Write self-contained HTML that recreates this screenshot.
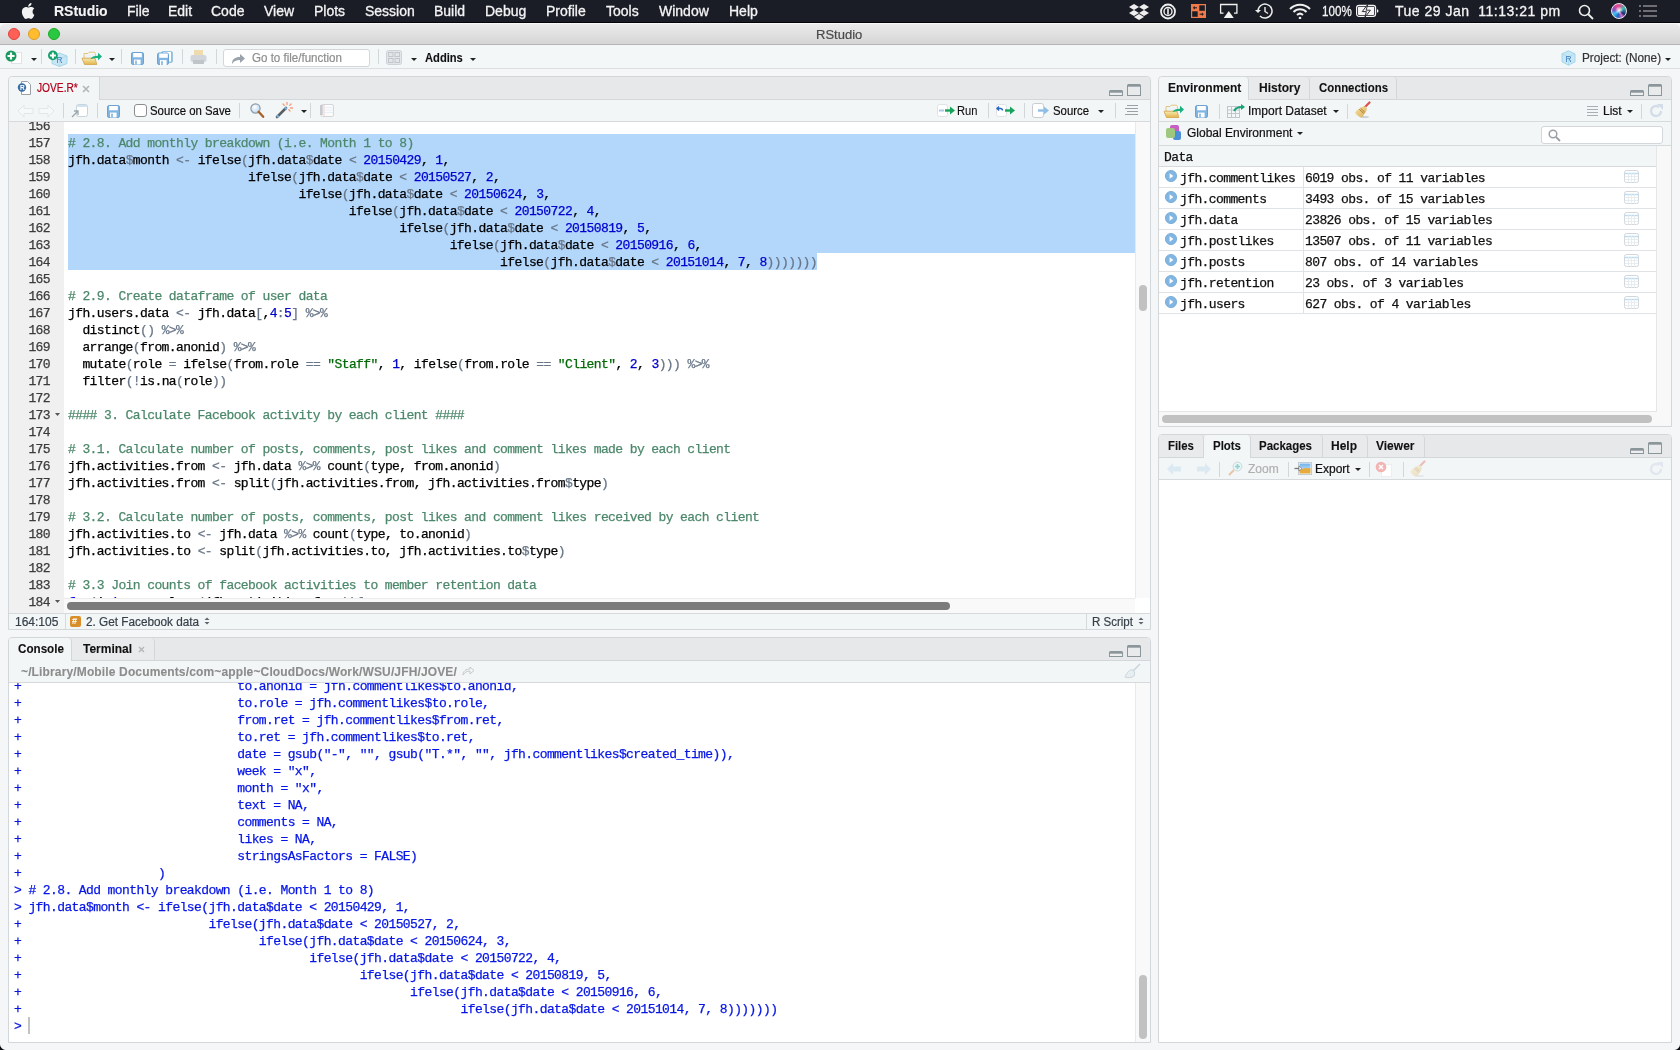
<!DOCTYPE html>
<html><head><meta charset="utf-8">
<style>
*{box-sizing:border-box}
html,body{margin:0;padding:0}
body{width:1680px;height:1050px;overflow:hidden;position:relative;will-change:transform;background:#f5f6f8;font-family:"Liberation Sans",sans-serif;font-size:12px;color:#1a1a1a}
.a{position:absolute}
.t{position:absolute;white-space:pre;line-height:14px}
.b{font-weight:bold}
i{font-style:normal}
.cl,.kl,.gl,.mono{-webkit-text-stroke:0.25px currentColor}
.t{-webkit-text-stroke:0.2px currentColor}
.t.b{-webkit-text-stroke:0.1px currentColor}
.cl i{-webkit-text-stroke:0.25px currentColor}
/* menubar */
#menubar{left:0;top:0;width:1680px;height:23px;background:#1a1d25;border-bottom:1px solid #050507}
#menubar .m{position:absolute;top:0;line-height:22px;font-size:14px;color:#f4f4f6;white-space:pre;-webkit-text-stroke:0.3px currentColor}
#menubar .m.b{-webkit-text-stroke:0.1px currentColor}
/* title */
#title{left:0;top:23px;width:1680px;height:22px;background:linear-gradient(#ebebeb,#d5d5d5);border-bottom:1px solid #b5b5b5;border-top:1px solid #f8f8f8;border-radius:5px 5px 0 0}
#toolbar{left:0;top:45px;width:1680px;height:24px;background:#f4f7f8;border-bottom:1px solid #dcdfe1}
.sep{position:absolute;width:1px;background:#d4d7da}
.pane{position:absolute;border:1px solid #d3d7da;background:#fff}
.tabbar{position:absolute;left:0;right:0;top:0;background:#e6e7e9;border-bottom:1px solid #d3d7da}
.tab{position:absolute;top:0;bottom:-1px;background:#e9eaec;border-right:1px solid #d3d7da;border-radius:4px 4px 0 0}
.tab.on{background:#f3f6f7;border-bottom:none}
.ptb{position:absolute;left:0;right:0;background:#f3f6f7;border-bottom:1px solid #d6dadd}
.gl{position:absolute;left:9px;width:41px;text-align:right;height:17px;line-height:17px;font-family:"Liberation Mono",monospace;font-size:13px;letter-spacing:-0.6px;color:#3b3b3b;white-space:pre}
.cl{position:absolute;left:68px;height:17px;line-height:17px;font-family:"Liberation Mono",monospace;font-size:13px;letter-spacing:-0.6px;color:#000;white-space:pre}
.kl{position:absolute;left:14px;height:17px;line-height:17px;font-family:"Liberation Mono",monospace;font-size:13px;letter-spacing:-0.6px;color:#0716e6;white-space:pre}
.mono{font-family:"Liberation Mono",monospace;font-size:13px;letter-spacing:-0.6px;white-space:pre;position:absolute;line-height:17px}
.cm{color:#4c886b}
.st{color:#036a07}
.nu{color:#0000cd}
.kw{color:#0000ff}
.op{color:#687687}
.drop{position:absolute;width:0;height:0;border-left:3px solid transparent;border-right:3px solid transparent;border-top:3.5px solid #222}
.minb{position:absolute;width:14px;height:6px;border:2px solid #8a9599;border-radius:3px 3px 1px 1px;background:#f6f6f6}
.maxb{position:absolute;width:14px;height:12px;border:1.5px solid #8a9599;border-top-width:2.5px;border-radius:2px;background:#eeeff0}
</style></head><body>

<!-- ============ MENUBAR ============ -->
<div id="menubar" class="a">
  <svg class="a" style="left:21px;top:3px" width="14" height="16" viewBox="0 0 14 16"><path fill="#f2f2f2" d="M11.6 8.5c0-2 1.6-2.9 1.7-3-1-1.4-2.4-1.6-2.9-1.6-1.2-.1-2.4.7-3 .7s-1.6-.7-2.6-.7C3.5 4 2.3 4.8 1.6 6c-1.4 2.4-.4 6 1 7.9.7 1 1.4 2 2.4 2s1.3-.6 2.5-.6 1.5.6 2.5.6 1.7-1 2.3-1.9c.7-1.1 1-2.1 1-2.2 0 0-2-.8-1.7-3.3zM9.700 2.6c.5-.7.9-1.6.8-2.6-.8 0-1.8.5-2.4 1.2-.5.6-1 1.5-.8 2.5.9.1 1.8-.4 2.4-1.1z"/></svg>
  <span class="m b" style="left:54px">RStudio</span>
  <span class="m" style="left:127px">File</span>
  <span class="m" style="left:168px">Edit</span>
  <span class="m" style="left:211px">Code</span>
  <span class="m" style="left:264px">View</span>
  <span class="m" style="left:314px">Plots</span>
  <span class="m" style="left:365px">Session</span>
  <span class="m" style="left:434px">Build</span>
  <span class="m" style="left:485px">Debug</span>
  <span class="m" style="left:546px">Profile</span>
  <span class="m" style="left:606px">Tools</span>
  <span class="m" style="left:659px">Window</span>
  <span class="m" style="left:729px">Help</span>
  <!-- status icons -->
  <svg class="a" style="left:1129px;top:3px" width="20" height="17" viewBox="0 0 20 17"><g fill="#eee"><path d="M5 1l5 3-5 3-5-3z"/><path d="M15 1l5 3-5 3-5-3z"/><path d="M5 7l5 3-5 3-5-3z"/><path d="M15 7l5 3-5 3-5-3z"/><path d="M10 11l5 3-5 3-5-3z"/></g></svg>
  <svg class="a" style="left:1159px;top:3px" width="18" height="17" viewBox="0 0 18 17"><circle cx="9" cy="8.5" r="7" fill="none" stroke="#eee" stroke-width="1.8"/><circle cx="9" cy="8.5" r="4" fill="none" stroke="#eee" stroke-width="1.4"/><rect x="8.2" y="5.5" width="1.6" height="6" fill="#eee"/></svg>
  <svg class="a" style="left:1191px;top:4px" width="15" height="14" viewBox="0 0 15 14"><rect width="15" height="14" fill="#f07a4a"/><rect x="8.3" y="1.3" width="5.5" height="5.5" fill="#1a1d25"/><rect x="1.2" y="7.3" width="5.5" height="5.5" fill="#1a1d25"/><path d="M2 3.8h4M3.3 2.4v2.8M8.6 10.2h4M11.3 8.8v2.8" stroke="#1a1d25" stroke-width="1"/></svg>
  <svg class="a" style="left:1219px;top:3px" width="20" height="16" viewBox="0 0 20 16"><path d="M4.5 10.2H1.6V1.5h16.3v8.7H15" fill="none" stroke="#f2f2f2" stroke-width="1.3"/><path d="M9.75 8l5 7h-10z" fill="#f2f2f2"/></svg>
  <svg class="a" style="left:1254px;top:2px" width="20" height="18" viewBox="0 0 20 18"><path d="M4 9a7 7 0 1 1 2 5" fill="none" stroke="#eee" stroke-width="1.5"/><path d="M1 8h6l-3 3z" fill="#eee"/><path d="M11 5v4.5l3 2" fill="none" stroke="#eee" stroke-width="1.4"/></svg>
  <svg class="a" style="left:1289px;top:3px" width="22" height="16" viewBox="0 0 22 16"><path d="M1 6a14 14 0 0 1 20 0" fill="none" stroke="#eee" stroke-width="2"/><path d="M4.5 9a9 9 0 0 1 13 0" fill="none" stroke="#eee" stroke-width="2"/><path d="M8 12a4.5 4.5 0 0 1 6 0" fill="none" stroke="#eee" stroke-width="2"/><circle cx="11" cy="15" r="1.3" fill="#eee"/></svg>
  <span class="m" style="left:1322px;font-size:14px;transform:scaleX(0.83);transform-origin:0 0">100%</span>
  <svg class="a" style="left:1355px;top:4px" width="25" height="14" viewBox="0 0 25 14"><rect x="1.6" y="1.4" width="19" height="11" rx="2.4" fill="none" stroke="#f4f4f4" stroke-width="1.2"/><rect x="3" y="2.8" width="16.2" height="8.2" rx="0.8" fill="#f4f4f4"/><path d="M22 5.2c1 0 1.4.8 1.4 1.7s-.4 1.7-1.4 1.7z" fill="#f4f4f4"/><path d="M12.6 0.6L7.2 7.6h4.2l-1.6 5.8 5.6-7.2h-4.2z" fill="#f4f4f4" stroke="#1a1d25" stroke-width="0.9" stroke-linejoin="round"/></svg>
  <span class="m" style="left:1395px;letter-spacing:0.5px">Tue 29 Jan  11:13:21 pm</span>
  <svg class="a" style="left:1578px;top:4px" width="16" height="16" viewBox="0 0 16 16"><circle cx="6.5" cy="6.5" r="5" fill="none" stroke="#eee" stroke-width="1.6"/><path d="M10 10l5 5" stroke="#eee" stroke-width="1.8"/></svg>
  <div class="a" style="left:1611px;top:3px;width:16px;height:16px;border-radius:50%;border:1.2px solid #e8e8ee;background:radial-gradient(circle at 50% 45%,rgba(255,255,255,.95) 0,rgba(255,255,255,.5) 2px,rgba(255,255,255,0) 4px),conic-gradient(from -30deg,#e0459a,#d8508a 40deg,#3fb8b0 90deg,#1d2c70 150deg,#d070c8 180deg,#2060c0 220deg,#40c8f0 270deg,#8050c0 310deg,#e0459a)"></div>
  <svg class="a" style="left:1639px;top:5px" width="18" height="13" viewBox="0 0 18 13"><g fill="#6e6e74"><rect x="0" y="0" width="2" height="2"/><rect x="4" y="0" width="14" height="2"/><rect x="0" y="5" width="2" height="2"/><rect x="4" y="5" width="14" height="2"/><rect x="0" y="10" width="2" height="2"/><rect x="4" y="10" width="14" height="2"/></g></svg>
</div>

<!-- ============ TITLE BAR ============ -->
<div id="title" class="a">
  <div class="a" style="left:8px;top:4px;width:12px;height:12px;border-radius:50%;background:#fe5f57;border:0.5px solid #e1443c"></div>
  <div class="a" style="left:28px;top:4px;width:12px;height:12px;border-radius:50%;background:#febc2e;border:0.5px solid #df9e23"></div>
  <div class="a" style="left:48px;top:4px;width:12px;height:12px;border-radius:50%;background:#28c840;border:0.5px solid #1aab29"></div>
  <span class="t" style="left:816px;top:3px;font-size:13px;line-height:15px;color:#4a4a4a">RStudio</span>
</div>

<!-- ============ MAIN TOOLBAR ============ -->
<div id="toolbar" class="a">
  <!-- new file -->
  <div class="a" style="left:11px;top:7px;width:11px;height:12px;background:#fff;border:1px solid #dfe3e6"></div>
  <svg class="a" style="left:5px;top:5px" width="12" height="12" viewBox="0 0 12 12"><circle cx="6" cy="6" r="5.5" fill="#1a9a5f"/><path d="M6 2.5v7M2.5 6h7" stroke="#fff" stroke-width="2.2"/></svg>
  <div class="drop" style="left:31px;top:13px"></div>
  <div class="sep" style="left:41px;top:4px;height:15px"></div>
  <!-- new project -->
  <svg class="a" style="left:47px;top:4px" width="22" height="19" viewBox="0 0 22 19"><path d="M12.5 4L20 7v7.5l-7.5 3-7.5-3V7z" fill="#c8e7f4" stroke="#94cfe6" stroke-width="0.8"/><path d="M5 7l7.5 3L20 7M12.5 10v7.5" fill="none" stroke="#a6d8ec" stroke-width="0.7"/><text x="9.6" y="14.2" font-size="8.5" fill="#3f78bc" font-family="Liberation Sans">R</text><circle cx="5.9" cy="6.4" r="4.9" fill="#17a06a"/><path d="M5.9 3.4v6M2.9 6.4h6" stroke="#fff" stroke-width="2"/></svg>
  <div class="sep" style="left:75px;top:4px;height:15px"></div>
  <!-- open -->
  <svg class="a" style="left:81px;top:6px" width="22" height="15" viewBox="0 0 22 15"><defs><linearGradient id="fg1" x1="0" y1="0" x2="0" y2="1"><stop offset="0" stop-color="#f7eab4"/><stop offset="1" stop-color="#e2b54a"/></linearGradient></defs><path d="M3 7V2.5h4l1.2-1.3h5.3l.8 1V7z" fill="#fbf7ea" stroke="#d8b76c" stroke-width="0.8"/><rect x="4" y="3" width="9.5" height="4" fill="#eef3f7"/><path d="M1 7.2h13l1.8 6.3H3.5z" fill="url(#fg1)" stroke="#cfa24a" stroke-width="0.8"/><path d="M9.5 8.2C10.8 5.6 13 4.8 17 4.8V1.8l4 3.8-4 3.7V6.9c-2.6 0-4.8.1-7.5 1.3z" fill="#17b07f"/></svg>
  <div class="drop" style="left:109px;top:13px"></div>
  <div class="sep" style="left:121px;top:4px;height:15px"></div>
  <!-- save -->
  <svg class="a" style="left:131px;top:7px" width="13" height="13" viewBox="0 0 13 13"><rect x="0.5" y="0.5" width="12" height="12" rx="1.6" fill="#80b4e2" stroke="#6ca2d3"/><rect x="2.2" y="1" width="8.6" height="4.3" fill="#fff"/><rect x="3" y="7.6" width="6.6" height="4.9" fill="#fff"/><rect x="4.2" y="8.6" width="1.6" height="3.9" fill="#80b4e2"/></svg>
  <!-- save all -->
  <svg class="a" style="left:157px;top:6px" width="16" height="14" viewBox="0 0 16 14"><rect x="4.5" y="0.5" width="11" height="11" rx="1.5" fill="#6fd0f0" stroke="#9cc3de"/><rect x="6" y="1" width="8" height="9.5" fill="#fff"/><g transform="translate(0,1.5)"><rect x="0.5" y="0.5" width="11" height="11.5" rx="1.6" fill="#80b4e2" stroke="#6ca2d3"/><rect x="2.2" y="1" width="8.6" height="4.3" fill="#fff"/><rect x="3" y="7.6" width="6.6" height="4.9" fill="#fff"/><rect x="4.2" y="8.6" width="1.6" height="3.9" fill="#80b4e2"/></g></svg>
  <div class="sep" style="left:182px;top:4px;height:15px"></div>
  <!-- print -->
  <svg class="a" style="left:190px;top:5px" width="17" height="15" viewBox="0 0 17 15"><rect x="4" y="0" width="9" height="6" fill="#eedcae"/><rect x="0.5" y="5" width="16" height="7" rx="2" fill="#d2d6db"/><rect x="3" y="10" width="11" height="4" fill="#c0c5ca"/></svg>
  <div class="sep" style="left:216px;top:4px;height:15px"></div>
  <!-- go to file -->
  <div class="a" style="left:223px;top:4px;width:147px;height:18px;background:#fff;border:1px solid #d3d7da;border-radius:3px"></div>
  <svg class="a" style="left:231px;top:8px" width="14" height="11" viewBox="0 0 14 11"><path d="M1 11c0-5 3-7 8-7V1l5 4.5-5 4.5V7c-4 0-6 1-8 4z" fill="#9aa3ab"/></svg>
  <span class="t" style="transform:scaleX(0.963);transform-origin:0 0;left:252px;top:6px;color:#8d8d8d">Go to file/function</span>
  <div class="sep" style="left:378px;top:4px;height:15px"></div>
  <!-- grid -->
  <svg class="a" style="left:386px;top:5px" width="16" height="15" viewBox="0 0 16 15"><rect x="0.5" y="0.5" width="15" height="14" rx="2" fill="#e3e6e9" stroke="#cfd3d7"/><rect x="2.5" y="2.5" width="4.5" height="4" fill="none" stroke="#c2c7cc"/><rect x="9" y="2.5" width="4.5" height="4" fill="none" stroke="#c2c7cc"/><rect x="2.5" y="8.5" width="4.5" height="4" fill="none" stroke="#c2c7cc"/><rect x="9" y="8.5" width="4.5" height="4" fill="none" stroke="#c2c7cc"/></svg>
  <div class="drop" style="left:411px;top:13px"></div>
  <span class="t b" style="transform:scaleX(0.93);transform-origin:0 0;left:425px;top:6px;color:#111">Addins</span>
  <div class="drop" style="left:470px;top:13px"></div>
  <!-- project -->
  <svg class="a" style="left:1561px;top:5px" width="15" height="16" viewBox="0 0 15 16"><path d="M7.5 0.8L14 3.8v8l-6.5 3.4L1 11.8v-8z" fill="#c8e7f4" stroke="#94cfe6" stroke-width="0.8"/><path d="M1 3.8l6.5 3.2L14 3.8M7.5 7v8.2" fill="none" stroke="#a6d8ec" stroke-width="0.7"/><text x="4.6" y="11.5" font-size="8.5" fill="#3f78bc" font-family="Liberation Sans">R</text></svg>
  <span class="t" style="transform:scaleX(0.98);transform-origin:0 0;left:1582px;top:6px;color:#333">Project: (None)</span>
  <div class="drop" style="left:1665px;top:13px"></div>

</div>

<!-- ============ EDITOR PANE ============ -->
<div class="a" style="left:8px;top:76px;width:1143px;height:554px;border:1px solid #d3d7da;background:#f3f6f7;border-radius:4px 4px 0 0"></div>
<!-- tab bar inactive area -->
<div class="a" style="left:99px;top:77px;width:1051px;height:23px;background:#e7e8ea;border-left:1px solid #d3d7da;border-bottom:1px solid #d3d7da;border-radius:0 4px 0 0"></div>
<div class="a" style="left:9px;top:77px;width:90px;height:23px;background:#f3f6f7;border-radius:4px 4px 0 0"></div>
<!-- tab content -->
<svg class="a" style="left:17px;top:80px" width="16" height="16" viewBox="0 0 16 16"><path d="M4.5 1.5h6l3 3v10h-9z" fill="#fff" stroke="#9aa0a6" stroke-width="1"/><circle cx="5" cy="7.5" r="4.2" fill="#3a6ea5"/><text x="3" y="10" font-size="6.5" font-weight="bold" fill="#fff" font-family="Liberation Sans">R</text></svg>
<span class="t" style="transform:scaleX(0.85);transform-origin:0 0;left:37px;top:81px;color:#b1001b">JOVE.R*</span>
<svg class="a" style="left:82px;top:85px" width="8" height="8" viewBox="0 0 8 8"><path d="M1 1l6 6M7 1l-6 6" stroke="#b5b5b5" stroke-width="1.6"/></svg>
<!-- min/max -->
<svg class="a" style="left:1109px;top:90px" width="14" height="6" viewBox="0 0 14 6"><path d="M1.5 0h11a1.5 1.5 0 0 1 1.5 1.5V6H0V1.5A1.5 1.5 0 0 1 1.5 0z" fill="#8b969b"/><rect x="1" y="2.7" width="12" height="2.3" fill="#eceef0"/></svg>
<svg class="a" style="left:1127px;top:84px" width="14" height="12" viewBox="0 0 14 12"><path d="M1.5 0h11a1.5 1.5 0 0 1 1.5 1.5V12H0V1.5A1.5 1.5 0 0 1 1.5 0z" fill="#8b969b"/><rect x="1" y="2.7" width="12" height="8.3" fill="#e9eaec"/></svg>
<!-- editor toolbar (bg from pane) -->
<div class="a" style="left:9px;top:121px;width:1141px;height:1px;background:#d6dadd"></div>
<svg class="a" style="left:17px;top:104px" width="38" height="14" viewBox="0 0 38 14"><path d="M1 7l6-6v3.5h9v5H7V13z" fill="#f6f9fa" stroke="#e3e7ea"/><path d="M37 7l-6-6v3.5h-9v5h9V13z" fill="#f6f9fa" stroke="#e3e7ea"/></svg>
<div class="sep" style="left:63px;top:103px;height:15px;background:#d3d6d9"></div>
<svg class="a" style="left:71px;top:104px" width="17" height="14" viewBox="0 0 17 14"><rect x="5.5" y="0.5" width="11" height="12" rx="2" fill="#fff" stroke="#c9d3da"/><rect x="6" y="1" width="10" height="2" fill="#cfe3f2"/><path d="M1 13l6-6M3 7h4v4" stroke="#9aa6ae" stroke-width="1.3" fill="none"/></svg>
<div class="sep" style="left:97px;top:103px;height:15px;background:#d3d6d9"></div>
<svg class="a" style="left:107px;top:105px" width="13" height="13" viewBox="0 0 13 13"><rect x="0.5" y="0.5" width="12" height="12" rx="1.6" fill="#80b4e2" stroke="#6ca2d3"/><rect x="2.2" y="1" width="8.6" height="4.3" fill="#fff"/><rect x="3" y="7.6" width="6.6" height="4.9" fill="#fff"/><rect x="4.2" y="8.6" width="1.6" height="3.9" fill="#80b4e2"/></svg>
<div class="a" style="left:134px;top:104px;width:13px;height:13px;border:1px solid #8d8d8d;border-radius:3px;background:#fff"></div>
<span class="t" style="transform:scaleX(0.948);transform-origin:0 0;left:150px;top:104px;color:#111">Source on Save</span>
<div class="sep" style="left:239px;top:103px;height:15px;background:#d3d6d9"></div>
<svg class="a" style="left:250px;top:103px" width="15" height="16" viewBox="0 0 15 16"><defs><radialGradient id="lg" cx="40%" cy="35%" r="70%"><stop offset="0" stop-color="#fff"/><stop offset="1" stop-color="#b9d6f0"/></radialGradient></defs><circle cx="5.5" cy="5.5" r="4.6" fill="url(#lg)" stroke="#8c9ba8" stroke-width="1.2"/><path d="M8.6 8.8l4.6 5" stroke="#a8602a" stroke-width="2.3" stroke-linecap="round"/></svg>
<svg class="a" style="left:275px;top:101px" width="19" height="18" viewBox="0 0 19 18"><path d="M2 16L11 7" stroke="#5a5f63" stroke-width="2.6" stroke-linecap="round"/><path d="M2 16l1.5-1.5M10 8l1.5-1.5" stroke="#6fb0e0" stroke-width="2.6"/><path d="M12 1.5v2M8 3l1.3 1.4M16 3l-1.3 1.4M17.5 7h-2M15 10l-1.2-1.4" stroke="#f59a7a" stroke-width="1.3" stroke-linecap="round"/></svg>
<div class="drop" style="left:301px;top:110px"></div>
<div class="sep" style="left:310px;top:103px;height:15px;background:#d3d6d9"></div>
<svg class="a" style="left:320px;top:104px" width="14" height="13" viewBox="0 0 14 13"><rect x="1" y="0.5" width="12.5" height="12" rx="1.5" fill="#fbfbfc" stroke="#d3d7db"/><path d="M4 1v11" stroke="#f3b9b9" stroke-width="0.7"/><path d="M4 3.5h9M4 6h9M4 8.5h9" stroke="#e3ebf5" stroke-width="0.7"/><path d="M0 2h3M0 4h3M0 6h3M0 8h3M0 10h3" stroke="#9aa0a6" stroke-width="0.8"/></svg>
<!-- right toolbar -->
<svg class="a" style="left:937px;top:104px" width="19" height="13" viewBox="0 0 19 13"><rect x="0.5" y="0.5" width="10" height="12" rx="2" fill="#fff" stroke="#dde2e6"/><path d="M2 6.5h5" stroke="#a8c9ea" stroke-width="2"/><path d="M8 6.5h6" stroke="#18a35b" stroke-width="2.4"/><path d="M13 2.5l5 4-5 4z" fill="#18a35b"/></svg>
<span class="t b" style="transform:scaleX(0.93);transform-origin:0 0;left:957px;top:104px;color:#111;font-weight:normal">Run</span>
<div class="sep" style="left:988px;top:103px;height:15px;background:#d3d6d9"></div>
<svg class="a" style="left:996px;top:104px" width="20" height="13" viewBox="0 0 20 13"><rect x="0.5" y="0.5" width="10" height="12" rx="2" fill="#fff" stroke="#dde2e6"/><path d="M3 2.5l-2 2 2 2M1.5 4.5h3a2 2 0 0 1 2 2" stroke="#2b67c8" stroke-width="1.4" fill="none"/><path d="M9 6.5h6" stroke="#18a35b" stroke-width="2.4"/><path d="M14 2.5l5 4-5 4z" fill="#18a35b"/></svg>
<div class="sep" style="left:1024px;top:103px;height:15px;background:#d3d6d9"></div>
<svg class="a" style="left:1032px;top:103px" width="19" height="15" viewBox="0 0 19 15"><rect x="0.5" y="0.5" width="11" height="14" rx="2" fill="#fff" stroke="#c9cdd1"/><path d="M6 7.5h7" stroke="#8fbfe6" stroke-width="2.4"/><path d="M12 3.5l5 4-5 4z" fill="#8fbfe6"/></svg>
<span class="t" style="transform:scaleX(0.946);transform-origin:0 0;left:1053px;top:104px;color:#111">Source</span>
<div class="drop" style="left:1098px;top:110px"></div>
<div class="sep" style="left:1115px;top:103px;height:15px;background:#d3d6d9"></div>
<svg class="a" style="left:1125px;top:105px" width="13" height="11" viewBox="0 0 13 11"><path d="M2 0.5h11M0 3.5h13M2 6.5h11M0 9.5h13" stroke="#9aa0a6" stroke-width="1"/></svg>

<!-- code area -->
<div class="a" style="left:9px;top:122px;width:1126px;height:476px;background:#fff;overflow:hidden">
  <div class="a" style="left:0;top:0;width:55px;height:491px;background:#f0f0f0"></div>
  <div class="a" style="left:59px;top:12px;width:1067px;height:119px;background:#b3d6fb"></div>
  <div class="a" style="left:59px;top:131px;width:749px;height:17px;background:#b3d6fb"></div>
</div>
<div class="a" style="left:64px;top:122px;width:1071px;height:476px;overflow:hidden">
  <div class="a" style="left:-64px;top:-122px;width:1200px;height:700px">
<div class="cl" style="top:118px"></div>
<div class="cl" style="top:135px"><i class="cm"># 2.8. Add monthly breakdown (i.e. Month 1 to 8)</i></div>
<div class="cl" style="top:152px">jfh.data<i class="op">$</i>month <i class="op">&lt;</i><i class="op">-</i> ifelse<i class="op">(</i>jfh.data<i class="op">$</i>date <i class="op">&lt;</i> <i class="nu">20150429</i>, <i class="nu">1</i>,</div>
<div class="cl" style="top:169px">                         ifelse<i class="op">(</i>jfh.data<i class="op">$</i>date <i class="op">&lt;</i> <i class="nu">20150527</i>, <i class="nu">2</i>,</div>
<div class="cl" style="top:186px">                                ifelse<i class="op">(</i>jfh.data<i class="op">$</i>date <i class="op">&lt;</i> <i class="nu">20150624</i>, <i class="nu">3</i>,</div>
<div class="cl" style="top:203px">                                       ifelse<i class="op">(</i>jfh.data<i class="op">$</i>date <i class="op">&lt;</i> <i class="nu">20150722</i>, <i class="nu">4</i>,</div>
<div class="cl" style="top:220px">                                              ifelse<i class="op">(</i>jfh.data<i class="op">$</i>date <i class="op">&lt;</i> <i class="nu">20150819</i>, <i class="nu">5</i>,</div>
<div class="cl" style="top:237px">                                                     ifelse<i class="op">(</i>jfh.data<i class="op">$</i>date <i class="op">&lt;</i> <i class="nu">20150916</i>, <i class="nu">6</i>,</div>
<div class="cl" style="top:254px">                                                            ifelse<i class="op">(</i>jfh.data<i class="op">$</i>date <i class="op">&lt;</i> <i class="nu">20151014</i>, <i class="nu">7</i>, <i class="nu">8</i><i class="op">)</i><i class="op">)</i><i class="op">)</i><i class="op">)</i><i class="op">)</i><i class="op">)</i><i class="op">)</i></div>
<div class="cl" style="top:271px"></div>
<div class="cl" style="top:288px"><i class="cm"># 2.9. Create dataframe of user data</i></div>
<div class="cl" style="top:305px">jfh.users.data <i class="op">&lt;</i><i class="op">-</i> jfh.data<i class="op">[</i>,<i class="nu">4</i><i class="op">:</i><i class="nu">5</i><i class="op">]</i> <i class="op">%&gt;%</i></div>
<div class="cl" style="top:322px">  distinct<i class="op">(</i><i class="op">)</i> <i class="op">%&gt;%</i></div>
<div class="cl" style="top:339px">  arrange<i class="op">(</i>from.anonid<i class="op">)</i> <i class="op">%&gt;%</i></div>
<div class="cl" style="top:356px">  mutate<i class="op">(</i>role <i class="op">=</i> ifelse<i class="op">(</i>from.role <i class="op">=</i><i class="op">=</i> <i class="st">"Staff"</i>, <i class="nu">1</i>, ifelse<i class="op">(</i>from.role <i class="op">=</i><i class="op">=</i> <i class="st">"Client"</i>, <i class="nu">2</i>, <i class="nu">3</i><i class="op">)</i><i class="op">)</i><i class="op">)</i> <i class="op">%&gt;%</i></div>
<div class="cl" style="top:373px">  filter<i class="op">(</i><i class="op">!</i>is.na<i class="op">(</i>role<i class="op">)</i><i class="op">)</i></div>
<div class="cl" style="top:390px"></div>
<div class="cl" style="top:407px"><i class="cm">#### 3. Calculate Facebook activity by each client ####</i></div>
<div class="cl" style="top:424px"></div>
<div class="cl" style="top:441px"><i class="cm"># 3.1. Calculate number of posts, comments, post likes and comment likes made by each client</i></div>
<div class="cl" style="top:458px">jfh.activities.from <i class="op">&lt;</i><i class="op">-</i> jfh.data <i class="op">%&gt;%</i> count<i class="op">(</i>type, from.anonid<i class="op">)</i></div>
<div class="cl" style="top:475px">jfh.activities.from <i class="op">&lt;</i><i class="op">-</i> split<i class="op">(</i>jfh.activities.from, jfh.activities.from<i class="op">$</i>type<i class="op">)</i></div>
<div class="cl" style="top:492px"></div>
<div class="cl" style="top:509px"><i class="cm"># 3.2. Calculate number of posts, comments, post likes and comment likes received by each client</i></div>
<div class="cl" style="top:526px">jfh.activities.to <i class="op">&lt;</i><i class="op">-</i> jfh.data <i class="op">%&gt;%</i> count<i class="op">(</i>type, to.anonid<i class="op">)</i></div>
<div class="cl" style="top:543px">jfh.activities.to <i class="op">&lt;</i><i class="op">-</i> split<i class="op">(</i>jfh.activities.to, jfh.activities.to<i class="op">$</i>type<i class="op">)</i></div>
<div class="cl" style="top:560px"></div>
<div class="cl" style="top:577px"><i class="cm"># 3.3 Join counts of facebook activities to member retention data</i></div>
<div class="cl" style="top:594px"><i class="kw">for</i><i class="op">(</i>i <i class="kw">in</i> seq_along<i class="op">(</i>jfh.activities.from<i class="op">)</i><i class="op">)</i><i class="op">{</i></div>
  </div>
</div>
<!-- gutter -->
<div class="a" style="left:9px;top:122px;width:55px;height:491px;background:#f0f0f0;overflow:hidden">
  <div class="a" style="left:-9px;top:-122px;width:100px;height:700px">
<div class="gl" style="top:118px">156</div>
<div class="gl" style="top:135px">157</div>
<div class="gl" style="top:152px">158</div>
<div class="gl" style="top:169px">159</div>
<div class="gl" style="top:186px">160</div>
<div class="gl" style="top:203px">161</div>
<div class="gl" style="top:220px">162</div>
<div class="gl" style="top:237px">163</div>
<div class="gl" style="top:254px">164</div>
<div class="gl" style="top:271px">165</div>
<div class="gl" style="top:288px">166</div>
<div class="gl" style="top:305px">167</div>
<div class="gl" style="top:322px">168</div>
<div class="gl" style="top:339px">169</div>
<div class="gl" style="top:356px">170</div>
<div class="gl" style="top:373px">171</div>
<div class="gl" style="top:390px">172</div>
<div class="gl" style="top:407px">173</div>
<svg class="a" style="left:55px;top:413px" width="5" height="3" viewBox="0 0 5 3"><path d="M0 0h5L2.5 3z" fill="#555"/></svg>
<div class="gl" style="top:424px">174</div>
<div class="gl" style="top:441px">175</div>
<div class="gl" style="top:458px">176</div>
<div class="gl" style="top:475px">177</div>
<div class="gl" style="top:492px">178</div>
<div class="gl" style="top:509px">179</div>
<div class="gl" style="top:526px">180</div>
<div class="gl" style="top:543px">181</div>
<div class="gl" style="top:560px">182</div>
<div class="gl" style="top:577px">183</div>
<div class="gl" style="top:594px">184</div>
<svg class="a" style="left:55px;top:600px" width="5" height="3" viewBox="0 0 5 3"><path d="M0 0h5L2.5 3z" fill="#555"/></svg>
  </div>
</div>
<!-- vertical scrollbar -->
<div class="a" style="left:1135px;top:122px;width:15px;height:476px;background:#f9f9f9;border-left:1px solid #e9e9e9"></div>
<div class="a" style="left:1139px;top:285px;width:8px;height:26px;background:#c1c1c1;border-radius:4px"></div>
<!-- horizontal scrollbar -->
<div class="a" style="left:64px;top:598px;width:1071px;height:15px;background:#f9f9f9;border-top:1px solid #ececec"></div>
<div class="a" style="left:67px;top:602px;width:883px;height:8px;background:#7b7b7b;border-radius:4px"></div>
<div class="a" style="left:1135px;top:598px;width:15px;height:15px;background:#fff"></div>
<!-- status bar -->
<div class="a" style="left:9px;top:613px;width:1141px;height:16px;background:#f3f6f7;border-top:1px solid #d6dadd"></div>
<span class="t" style="left:15px;top:615px;color:#37414a">164:105</span>
<div class="sep" style="left:65px;top:614px;height:15px;background:#d6dadd"></div>
<div class="a" style="left:70px;top:616px;width:11px;height:11px;background:#d98e2c;border-radius:2px"></div>
<span class="t b" style="left:72px;top:614px;font-size:9px;color:#fff">#</span>
<span class="t" style="left:86px;top:615px;color:#37414a;transform:scaleX(0.98);transform-origin:0 0">2. Get Facebook data</span>
<svg class="a" style="left:204px;top:616px" width="6" height="10" viewBox="0 0 6 10"><path d="M0.5 4l2.5-2.6 2.5 2.6zM0.5 6l2.5 2.6 2.5-2.6z" fill="#5d666c"/></svg>
<div class="sep" style="left:1086px;top:614px;height:15px;background:#d6dadd"></div>
<span class="t" style="transform:scaleX(0.96);transform-origin:0 0;left:1092px;top:615px;color:#37414a">R Script</span>
<svg class="a" style="left:1138px;top:616px" width="6" height="10" viewBox="0 0 6 10"><path d="M0.5 4l2.5-2.6 2.5 2.6zM0.5 6l2.5 2.6 2.5-2.6z" fill="#5d666c"/></svg>
<!-- ============ CONSOLE PANE ============ -->
<div class="a" style="left:8px;top:637px;width:1143px;height:406px;border:1px solid #d3d7da;background:#fff;border-radius:4px 4px 0 0"></div>
<div class="a" style="left:9px;top:638px;width:1141px;height:23px;background:#e7e8ea;border-bottom:1px solid #d3d7da;border-radius:4px 4px 0 0"></div>
<div class="a" style="left:9px;top:638px;width:63px;height:23px;background:#f3f6f7;border-right:1px solid #d3d7da;border-radius:4px 4px 0 0"></div>
<div class="a" style="left:72px;top:638px;width:83px;height:22px;background:#e9eaec;border-right:1px solid #d3d7da;border-radius:4px 4px 0 0"></div>
<span class="t b" style="transform:scaleX(0.97);transform-origin:0 0;left:18px;top:642px;color:#111">Console</span>
<span class="t b" style="left:83px;top:642px;color:#111">Terminal</span>
<svg class="a" style="left:138px;top:646px" width="7" height="7" viewBox="0 0 7 7"><path d="M1 1l5 5M6 1l-5 5" stroke="#b5b5b5" stroke-width="1.4"/></svg>
<svg class="a" style="left:1109px;top:651px" width="14" height="6" viewBox="0 0 14 6"><path d="M1.5 0h11a1.5 1.5 0 0 1 1.5 1.5V6H0V1.5A1.5 1.5 0 0 1 1.5 0z" fill="#8b969b"/><rect x="1" y="2.7" width="12" height="2.3" fill="#eceef0"/></svg>
<svg class="a" style="left:1127px;top:645px" width="14" height="12" viewBox="0 0 14 12"><path d="M1.5 0h11a1.5 1.5 0 0 1 1.5 1.5V12H0V1.5A1.5 1.5 0 0 1 1.5 0z" fill="#8b969b"/><rect x="1" y="2.7" width="12" height="8.3" fill="#e9eaec"/></svg>
<!-- path bar -->
<div class="a" style="left:9px;top:661px;width:1141px;height:22px;background:#f3f6f7;border-bottom:1px solid #d6dadd"></div>
<span class="t b" style="left:21px;top:665px;color:#8c8c8c;letter-spacing:0.14px">~/Library/Mobile Documents/com~apple~CloudDocs/Work/WSU/JFH/JOVE/</span>
<svg class="a" style="left:462px;top:666px" width="12" height="10" viewBox="0 0 12 10"><path d="M1 9c0-4 3-6 7-6V1l4 3.5-4 3.5V5c-3 0-5 1-7 4z" fill="none" stroke="#c5c9cd"/></svg>
<svg class="a" style="left:1124px;top:663px" width="17" height="17" viewBox="0 0 17 17"><path d="M16 1L9 8" stroke="#c9d3db" stroke-width="1.5"/><path d="M9 7c-3-1-6 2-8 7 3 1 6 1 9-1 1-2 1-4-1-6z" fill="#e9eef2" stroke="#c9d3db"/></svg>
<!-- console content -->
<div class="a" style="left:9px;top:683px;width:1126px;height:359px;overflow:hidden">
  <div class="a" style="left:-9px;top:-683px;width:1200px;height:1100px">
<div class="kl" style="top:678px">+                              to.anonid = jfh.commentlikes$to.anonid,</div>
<div class="kl" style="top:695px">+                              to.role = jfh.commentlikes$to.role,</div>
<div class="kl" style="top:712px">+                              from.ret = jfh.commentlikes$from.ret,</div>
<div class="kl" style="top:729px">+                              to.ret = jfh.commentlikes$to.ret,</div>
<div class="kl" style="top:746px">+                              date = gsub("-", "", gsub("T.*", "", jfh.commentlikes$created_time)),</div>
<div class="kl" style="top:763px">+                              week = "x",</div>
<div class="kl" style="top:780px">+                              month = "x",</div>
<div class="kl" style="top:797px">+                              text = NA,</div>
<div class="kl" style="top:814px">+                              comments = NA,</div>
<div class="kl" style="top:831px">+                              likes = NA,</div>
<div class="kl" style="top:848px">+                              stringsAsFactors = FALSE)</div>
<div class="kl" style="top:865px">+                   )</div>
<div class="kl" style="top:882px">&gt; # 2.8. Add monthly breakdown (i.e. Month 1 to 8)</div>
<div class="kl" style="top:899px">&gt; jfh.data$month &lt;- ifelse(jfh.data$date &lt; 20150429, 1,</div>
<div class="kl" style="top:916px">+                          ifelse(jfh.data$date &lt; 20150527, 2,</div>
<div class="kl" style="top:933px">+                                 ifelse(jfh.data$date &lt; 20150624, 3,</div>
<div class="kl" style="top:950px">+                                        ifelse(jfh.data$date &lt; 20150722, 4,</div>
<div class="kl" style="top:967px">+                                               ifelse(jfh.data$date &lt; 20150819, 5,</div>
<div class="kl" style="top:984px">+                                                      ifelse(jfh.data$date &lt; 20150916, 6,</div>
<div class="kl" style="top:1001px">+                                                             ifelse(jfh.data$date &lt; 20151014, 7, 8)))))))</div>
<div class="kl" style="top:1018px">&gt; </div>
  </div>
</div>
<div class="a" style="left:28px;top:1017px;width:2px;height:17px;background:#c2c2c2"></div>
<!-- console vscroll -->
<div class="a" style="left:1135px;top:683px;width:15px;height:359px;background:#f9f9f9;border-left:1px solid #e9e9e9"></div>
<div class="a" style="left:1139px;top:975px;width:8px;height:64px;background:#c1c1c1;border-radius:4px"></div>
<!-- ============ ENVIRONMENT PANE ============ -->
<div class="a" style="left:1158px;top:76px;width:514px;height:351px;border:1px solid #d3d7da;background:#fff;border-radius:4px 4px 0 0"></div>
<div class="a" style="left:1159px;top:77px;width:512px;height:23px;background:#e7e8ea;border-bottom:1px solid #d3d7da;border-radius:4px 4px 0 0"></div>
<div class="a" style="left:1159px;top:77px;width:90px;height:23px;background:#f3f6f7;border-right:1px solid #d3d7da;border-radius:4px 4px 0 0"></div>
<div class="a" style="left:1249px;top:77px;width:61px;height:22px;background:#e9eaec;border-right:1px solid #d3d7da;border-radius:4px 4px 0 0"></div>
<div class="a" style="left:1310px;top:77px;width:87px;height:22px;background:#e9eaec;border-right:1px solid #d3d7da;border-radius:4px 4px 0 0"></div>
<span class="t b" style="left:1168px;top:81px;color:#111">Environment</span>
<span class="t b" style="left:1259px;top:81px;color:#111">History</span>
<span class="t b" style="transform:scaleX(0.95);transform-origin:0 0;left:1319px;top:81px;color:#111">Connections</span>
<svg class="a" style="left:1630px;top:90px" width="14" height="6" viewBox="0 0 14 6"><path d="M1.5 0h11a1.5 1.5 0 0 1 1.5 1.5V6H0V1.5A1.5 1.5 0 0 1 1.5 0z" fill="#8b969b"/><rect x="1" y="2.7" width="12" height="2.3" fill="#eceef0"/></svg>
<svg class="a" style="left:1648px;top:84px" width="14" height="12" viewBox="0 0 14 12"><path d="M1.5 0h11a1.5 1.5 0 0 1 1.5 1.5V12H0V1.5A1.5 1.5 0 0 1 1.5 0z" fill="#8b969b"/><rect x="1" y="2.7" width="12" height="8.3" fill="#e9eaec"/></svg>
<!-- toolbar -->
<div class="a" style="left:1159px;top:100px;width:512px;height:22px;background:#f3f6f7;border-bottom:1px solid #d6dadd"></div>
<svg class="a" style="left:1163px;top:104px" width="22" height="15" viewBox="0 0 22 15"><defs><linearGradient id="fg2" x1="0" y1="0" x2="0" y2="1"><stop offset="0" stop-color="#f7eab4"/><stop offset="1" stop-color="#e2b54a"/></linearGradient></defs><path d="M3 7V2.5h4l1.2-1.3h5.3l.8 1V7z" fill="#fbf7ea" stroke="#d8b76c" stroke-width="0.8"/><rect x="4" y="3" width="9.5" height="4" fill="#eef3f7"/><path d="M1 7.2h13l1.8 6.3H3.5z" fill="url(#fg2)" stroke="#cfa24a" stroke-width="0.8"/><path d="M9.5 8.2C10.8 5.6 13 4.8 17 4.8V1.8l4 3.8-4 3.7V6.9c-2.6 0-4.8.1-7.5 1.3z" fill="#17b07f"/></svg>
<svg class="a" style="left:1195px;top:105px" width="13" height="13" viewBox="0 0 13 13"><rect x="0.5" y="0.5" width="12" height="12" rx="1.6" fill="#80b4e2" stroke="#6ca2d3"/><rect x="2.2" y="1" width="8.6" height="4.3" fill="#fff"/><rect x="3" y="7.6" width="6.6" height="4.9" fill="#fff"/><rect x="4.2" y="8.6" width="1.6" height="3.9" fill="#80b4e2"/></svg>
<div class="sep" style="left:1219px;top:104px;height:15px"></div>
<svg class="a" style="left:1227px;top:103px" width="19" height="15" viewBox="0 0 19 15"><rect x="0.5" y="3.5" width="12" height="11" fill="#f4f6f8" stroke="#c0c6cc"/><path d="M0.5 7h12M0.5 10.5h12M4.5 3.5v11M8.5 3.5v11" stroke="#c0c6cc"/><path d="M7 8c2-4 5-4 8-4" stroke="#17a377" stroke-width="2" fill="none"/><path d="M14 1l4 3-4 3z" fill="#17a377"/></svg>
<span class="t" style="left:1248px;top:104px;color:#111">Import Dataset</span>
<div class="drop" style="left:1333px;top:110px"></div>
<div class="sep" style="left:1347px;top:104px;height:15px"></div>
<svg class="a" style="left:1354px;top:101px" width="17" height="18" viewBox="0 0 17 18"><defs><linearGradient id="bg1" x1="0" y1="0" x2="1" y2="1"><stop offset="0" stop-color="#f6e4a0"/><stop offset="1" stop-color="#d8ae5c"/></linearGradient></defs><ellipse cx="10.5" cy="16" rx="4.5" ry="1" fill="#aeb5bb" opacity=".6"/><path d="M15.5 1.5L11 6" stroke="#d9534a" stroke-width="2.2" stroke-linecap="round"/><path d="M11.8 5.6c1.3 1.4 1.4 3.4-.1 5.4L8.2 16.2c-2.2.5-5.2-1.2-7.2-4.7 2-2.6 5-4.4 8-5.9z" fill="url(#bg1)"/><path d="M6.6 7.2l4.3 4.1M5.3 8.3l4.4 4.1" stroke="#b57c34" stroke-width="1"/></svg>
<svg class="a" style="left:1587px;top:106px" width="11" height="10" viewBox="0 0 11 10"><path d="M0 .5h11M0 3.5h11M0 6.5h11M0 9.5h11" stroke="#a9aeb3"/></svg>
<span class="t" style="left:1603px;top:104px;color:#111">List</span>
<div class="drop" style="left:1627px;top:110px"></div>
<div class="sep" style="left:1641px;top:104px;height:15px"></div>
<svg class="a" style="left:1648px;top:103px" width="16" height="16" viewBox="0 0 16 16"><path d="M13 8a5 5 0 1 1-2-4" fill="none" stroke="#d3dde8" stroke-width="2.4"/><path d="M9 1h6v6z" fill="#d3dde8"/></svg>
<!-- global env bar -->
<div class="a" style="left:1159px;top:122px;width:512px;height:24px;background:#f3f6f7;border-bottom:1px solid #d6dadd"></div>
<svg class="a" style="left:1166px;top:125px" width="16" height="16" viewBox="0 0 16 16"><rect x="4" y="0" width="9" height="9" rx="2" fill="#c85fc6"/><rect x="7" y="6" width="8" height="9" rx="2" fill="#4b8fd8"/><rect x="0" y="3" width="9" height="10" rx="2" fill="#9fc87e"/></svg>
<span class="t" style="left:1187px;top:126px;color:#111">Global Environment</span>
<div class="drop" style="left:1297px;top:132px"></div>
<div class="a" style="left:1541px;top:126px;width:122px;height:18px;background:#fff;border:1px solid #d3d7da;border-radius:3px"></div>
<svg class="a" style="left:1548px;top:129px" width="13" height="13" viewBox="0 0 13 13"><circle cx="5" cy="5" r="3.8" fill="none" stroke="#9aa0a6" stroke-width="1.5"/><path d="M8 8l4 4" stroke="#9aa0a6" stroke-width="1.8"/></svg>
<!-- table -->
<div class="a" style="left:1159px;top:146px;width:497px;height:21px;background:#f3f6f7;border-bottom:1px solid #d6dadd"></div>
<span class="mono" style="left:1164px;top:149px;color:#111">Data</span>
<div class="a" style="left:1159px;top:167px;width:497px;height:21px;border-bottom:1px solid #dfe3e6;background:#fff"></div>
<div class="a" style="left:1303px;top:167px;width:1px;height:20px;background:#dfe3e6"></div>
<svg class="a" style="left:1165px;top:170px" width="12" height="12" viewBox="0 0 12 12"><circle cx="6" cy="6" r="5.6" fill="#82b6e2" stroke="#6ea4d3" stroke-width="0.8"/><path d="M4.6 3.2l3.8 2.8-3.8 2.8z" fill="#fff"/></svg>
<span class="mono" style="left:1180px;top:170px;color:#111">jfh.commentlikes</span>
<span class="mono" style="left:1305px;top:170px;color:#111">6019 obs. of 11 variables</span>
<svg class="a" style="left:1624px;top:170px" width="15" height="13" viewBox="0 0 15 13"><rect x="0.5" y="0.5" width="14" height="12" rx="2" fill="#fff" stroke="#cfd6dc"/><path d="M0.5 3.5h14" stroke="#bcdcf0" stroke-width="1.5"/><path d="M0.5 6.5h14M0.5 9.5h14M4.5 3v10M7.5 3v10M10.5 3v10" stroke="#e3e8ec" stroke-width="0.8"/></svg>
<div class="a" style="left:1159px;top:188px;width:497px;height:21px;border-bottom:1px solid #dfe3e6;background:#fff"></div>
<div class="a" style="left:1303px;top:188px;width:1px;height:20px;background:#dfe3e6"></div>
<svg class="a" style="left:1165px;top:191px" width="12" height="12" viewBox="0 0 12 12"><circle cx="6" cy="6" r="5.6" fill="#82b6e2" stroke="#6ea4d3" stroke-width="0.8"/><path d="M4.6 3.2l3.8 2.8-3.8 2.8z" fill="#fff"/></svg>
<span class="mono" style="left:1180px;top:191px;color:#111">jfh.comments</span>
<span class="mono" style="left:1305px;top:191px;color:#111">3493 obs. of 15 variables</span>
<svg class="a" style="left:1624px;top:191px" width="15" height="13" viewBox="0 0 15 13"><rect x="0.5" y="0.5" width="14" height="12" rx="2" fill="#fff" stroke="#cfd6dc"/><path d="M0.5 3.5h14" stroke="#bcdcf0" stroke-width="1.5"/><path d="M0.5 6.5h14M0.5 9.5h14M4.5 3v10M7.5 3v10M10.5 3v10" stroke="#e3e8ec" stroke-width="0.8"/></svg>
<div class="a" style="left:1159px;top:209px;width:497px;height:21px;border-bottom:1px solid #dfe3e6;background:#fff"></div>
<div class="a" style="left:1303px;top:209px;width:1px;height:20px;background:#dfe3e6"></div>
<svg class="a" style="left:1165px;top:212px" width="12" height="12" viewBox="0 0 12 12"><circle cx="6" cy="6" r="5.6" fill="#82b6e2" stroke="#6ea4d3" stroke-width="0.8"/><path d="M4.6 3.2l3.8 2.8-3.8 2.8z" fill="#fff"/></svg>
<span class="mono" style="left:1180px;top:212px;color:#111">jfh.data</span>
<span class="mono" style="left:1305px;top:212px;color:#111">23826 obs. of 15 variables</span>
<svg class="a" style="left:1624px;top:212px" width="15" height="13" viewBox="0 0 15 13"><rect x="0.5" y="0.5" width="14" height="12" rx="2" fill="#fff" stroke="#cfd6dc"/><path d="M0.5 3.5h14" stroke="#bcdcf0" stroke-width="1.5"/><path d="M0.5 6.5h14M0.5 9.5h14M4.5 3v10M7.5 3v10M10.5 3v10" stroke="#e3e8ec" stroke-width="0.8"/></svg>
<div class="a" style="left:1159px;top:230px;width:497px;height:21px;border-bottom:1px solid #dfe3e6;background:#fff"></div>
<div class="a" style="left:1303px;top:230px;width:1px;height:20px;background:#dfe3e6"></div>
<svg class="a" style="left:1165px;top:233px" width="12" height="12" viewBox="0 0 12 12"><circle cx="6" cy="6" r="5.6" fill="#82b6e2" stroke="#6ea4d3" stroke-width="0.8"/><path d="M4.6 3.2l3.8 2.8-3.8 2.8z" fill="#fff"/></svg>
<span class="mono" style="left:1180px;top:233px;color:#111">jfh.postlikes</span>
<span class="mono" style="left:1305px;top:233px;color:#111">13507 obs. of 11 variables</span>
<svg class="a" style="left:1624px;top:233px" width="15" height="13" viewBox="0 0 15 13"><rect x="0.5" y="0.5" width="14" height="12" rx="2" fill="#fff" stroke="#cfd6dc"/><path d="M0.5 3.5h14" stroke="#bcdcf0" stroke-width="1.5"/><path d="M0.5 6.5h14M0.5 9.5h14M4.5 3v10M7.5 3v10M10.5 3v10" stroke="#e3e8ec" stroke-width="0.8"/></svg>
<div class="a" style="left:1159px;top:251px;width:497px;height:21px;border-bottom:1px solid #dfe3e6;background:#fff"></div>
<div class="a" style="left:1303px;top:251px;width:1px;height:20px;background:#dfe3e6"></div>
<svg class="a" style="left:1165px;top:254px" width="12" height="12" viewBox="0 0 12 12"><circle cx="6" cy="6" r="5.6" fill="#82b6e2" stroke="#6ea4d3" stroke-width="0.8"/><path d="M4.6 3.2l3.8 2.8-3.8 2.8z" fill="#fff"/></svg>
<span class="mono" style="left:1180px;top:254px;color:#111">jfh.posts</span>
<span class="mono" style="left:1305px;top:254px;color:#111">807 obs. of 14 variables</span>
<svg class="a" style="left:1624px;top:254px" width="15" height="13" viewBox="0 0 15 13"><rect x="0.5" y="0.5" width="14" height="12" rx="2" fill="#fff" stroke="#cfd6dc"/><path d="M0.5 3.5h14" stroke="#bcdcf0" stroke-width="1.5"/><path d="M0.5 6.5h14M0.5 9.5h14M4.5 3v10M7.5 3v10M10.5 3v10" stroke="#e3e8ec" stroke-width="0.8"/></svg>
<div class="a" style="left:1159px;top:272px;width:497px;height:21px;border-bottom:1px solid #dfe3e6;background:#fff"></div>
<div class="a" style="left:1303px;top:272px;width:1px;height:20px;background:#dfe3e6"></div>
<svg class="a" style="left:1165px;top:275px" width="12" height="12" viewBox="0 0 12 12"><circle cx="6" cy="6" r="5.6" fill="#82b6e2" stroke="#6ea4d3" stroke-width="0.8"/><path d="M4.6 3.2l3.8 2.8-3.8 2.8z" fill="#fff"/></svg>
<span class="mono" style="left:1180px;top:275px;color:#111">jfh.retention</span>
<span class="mono" style="left:1305px;top:275px;color:#111">23 obs. of 3 variables</span>
<svg class="a" style="left:1624px;top:275px" width="15" height="13" viewBox="0 0 15 13"><rect x="0.5" y="0.5" width="14" height="12" rx="2" fill="#fff" stroke="#cfd6dc"/><path d="M0.5 3.5h14" stroke="#bcdcf0" stroke-width="1.5"/><path d="M0.5 6.5h14M0.5 9.5h14M4.5 3v10M7.5 3v10M10.5 3v10" stroke="#e3e8ec" stroke-width="0.8"/></svg>
<div class="a" style="left:1159px;top:293px;width:497px;height:21px;border-bottom:1px solid #dfe3e6;background:#fff"></div>
<div class="a" style="left:1303px;top:293px;width:1px;height:20px;background:#dfe3e6"></div>
<svg class="a" style="left:1165px;top:296px" width="12" height="12" viewBox="0 0 12 12"><circle cx="6" cy="6" r="5.6" fill="#82b6e2" stroke="#6ea4d3" stroke-width="0.8"/><path d="M4.6 3.2l3.8 2.8-3.8 2.8z" fill="#fff"/></svg>
<span class="mono" style="left:1180px;top:296px;color:#111">jfh.users</span>
<span class="mono" style="left:1305px;top:296px;color:#111">627 obs. of 4 variables</span>
<svg class="a" style="left:1624px;top:296px" width="15" height="13" viewBox="0 0 15 13"><rect x="0.5" y="0.5" width="14" height="12" rx="2" fill="#fff" stroke="#cfd6dc"/><path d="M0.5 3.5h14" stroke="#bcdcf0" stroke-width="1.5"/><path d="M0.5 6.5h14M0.5 9.5h14M4.5 3v10M7.5 3v10M10.5 3v10" stroke="#e3e8ec" stroke-width="0.8"/></svg>
<div class="a" style="left:1656px;top:146px;width:15px;height:280px;background:#f8f8f8;border-left:1px solid #e6e6e6"></div>
<!-- hscroll -->
<div class="a" style="left:1159px;top:411px;width:498px;height:15px;background:#f8f8f8;border-top:1px solid #e6e6e6"></div><div class="a" style="left:1657px;top:411px;width:14px;height:15px;background:#f8f8f8"></div>
<div class="a" style="left:1162px;top:415px;width:490px;height:8px;background:#c1c1c1;border-radius:4px"></div>
<!-- ============ FILES PANE ============ -->
<div class="a" style="left:1158px;top:434px;width:514px;height:609px;border:1px solid #d3d7da;background:#fff;border-radius:4px 4px 0 0"></div>
<div class="a" style="left:1159px;top:435px;width:512px;height:23px;background:#e7e8ea;border-bottom:1px solid #d3d7da;border-radius:4px 4px 0 0"></div>
<div class="a" style="left:1159px;top:435px;width:45px;height:22px;background:#e9eaec;border-right:1px solid #d3d7da;border-radius:4px 4px 0 0"></div>
<div class="a" style="left:1204px;top:435px;width:47px;height:23px;background:#f3f6f7;border-right:1px solid #d3d7da;border-radius:4px 4px 0 0"></div>
<div class="a" style="left:1251px;top:435px;width:72px;height:22px;background:#e9eaec;border-right:1px solid #d3d7da;border-radius:4px 4px 0 0"></div>
<div class="a" style="left:1323px;top:435px;width:45px;height:22px;background:#e9eaec;border-right:1px solid #d3d7da;border-radius:4px 4px 0 0"></div>
<div class="a" style="left:1368px;top:435px;width:57px;height:22px;background:#e9eaec;border-right:1px solid #d3d7da;border-radius:4px 4px 0 0"></div>
<span class="t b" style="transform:scaleX(0.947);transform-origin:0 0;left:1168px;top:439px;color:#111">Files</span>
<span class="t b" style="transform:scaleX(0.954);transform-origin:0 0;left:1213px;top:439px;color:#111">Plots</span>
<span class="t b" style="transform:scaleX(0.956);transform-origin:0 0;left:1259px;top:439px;color:#111">Packages</span>
<span class="t b" style="left:1331px;top:439px;color:#111">Help</span>
<span class="t b" style="left:1376px;top:439px;color:#111">Viewer</span>
<svg class="a" style="left:1630px;top:448px" width="14" height="6" viewBox="0 0 14 6"><path d="M1.5 0h11a1.5 1.5 0 0 1 1.5 1.5V6H0V1.5A1.5 1.5 0 0 1 1.5 0z" fill="#8b969b"/><rect x="1" y="2.7" width="12" height="2.3" fill="#eceef0"/></svg>
<svg class="a" style="left:1648px;top:442px" width="14" height="12" viewBox="0 0 14 12"><path d="M1.5 0h11a1.5 1.5 0 0 1 1.5 1.5V12H0V1.5A1.5 1.5 0 0 1 1.5 0z" fill="#8b969b"/><rect x="1" y="2.7" width="12" height="8.3" fill="#e9eaec"/></svg>
<div class="a" style="left:1159px;top:458px;width:512px;height:22px;background:#f3f6f7;border-bottom:1px solid #d6dadd"></div>
<svg class="a" style="left:1166px;top:462px" width="46" height="14" viewBox="0 0 46 14"><path d="M1 7l6-6v3.5h8v5H7V13z" fill="#dbe9f2"/><path d="M45 7l-6-6v3.5h-8v5h8V13z" fill="#dbe9f2"/></svg>
<div class="sep" style="left:1219px;top:462px;height:15px"></div>
<svg class="a" style="left:1228px;top:461px" width="15" height="15" viewBox="0 0 15 15"><circle cx="9.5" cy="5.5" r="4.5" fill="#e6f4f4" stroke="#cfd9dd"/><path d="M9.5 3v5M7 5.5h5" stroke="#8fd3cf" stroke-width="1.5"/><path d="M6 9l-5 5" stroke="#e7c6a5" stroke-width="2"/></svg>
<span class="t" style="left:1248px;top:462px;color:#b0b0b0">Zoom</span>
<div class="sep" style="left:1288px;top:462px;height:15px"></div>
<svg class="a" style="left:1294px;top:462px" width="18" height="13" viewBox="0 0 18 13"><defs><linearGradient id="sky" x1="0" y1="0" x2="0" y2="1"><stop offset="0" stop-color="#6fb2ea"/><stop offset="1" stop-color="#e3f1fb"/></linearGradient></defs><rect x="4.5" y="0.5" width="13" height="12" fill="#fff" stroke="#c5cbd1"/><rect x="5.5" y="1.5" width="11" height="10" fill="url(#sky)"/><path d="M5.5 11.5V8c2-1.5 4-1 6-2.2 2 .8 3.5.5 5 .2v5.5z" fill="#e6ad3e"/><path d="M0.5 6.5h6" stroke="#777" stroke-width="1.3"/><path d="M5 4l3 2.5L5 9z" fill="#fff" stroke="#666" stroke-width="0.6"/></svg>
<span class="t" style="left:1315px;top:462px;color:#111">Export</span>
<div class="drop" style="left:1355px;top:468px"></div>
<div class="sep" style="left:1369px;top:462px;height:15px"></div>
<svg class="a" style="left:1375px;top:461px" width="17" height="16" viewBox="0 0 17 16"><rect x="6.5" y="3.5" width="10" height="12" fill="#fff" stroke="#eceff1"/><circle cx="6" cy="6" r="5.3" fill="#f2b3b3"/><path d="M4 4l4 4M8 4l-4 4" stroke="#fff" stroke-width="1.6"/></svg>
<div class="sep" style="left:1403px;top:462px;height:15px"></div>
<svg class="a" style="left:1409px;top:460px;opacity:.35" width="17" height="18" viewBox="0 0 17 18"><defs><linearGradient id="bg2" x1="0" y1="0" x2="1" y2="1"><stop offset="0" stop-color="#f6e4a0"/><stop offset="1" stop-color="#d8ae5c"/></linearGradient></defs><ellipse cx="10.5" cy="16" rx="4.5" ry="1" fill="#aeb5bb" opacity=".6"/><path d="M15.5 1.5L11 6" stroke="#d9534a" stroke-width="2.2" stroke-linecap="round"/><path d="M11.8 5.6c1.3 1.4 1.4 3.4-.1 5.4L8.2 16.2c-2.2.5-5.2-1.2-7.2-4.7 2-2.6 5-4.4 8-5.9z" fill="url(#bg2)"/><path d="M6.6 7.2l4.3 4.1M5.3 8.3l4.4 4.1" stroke="#b57c34" stroke-width="1"/></svg>
<svg class="a" style="left:1648px;top:461px" width="16" height="16" viewBox="0 0 16 16"><path d="M13 8a5 5 0 1 1-2-4" fill="none" stroke="#e1e7ee" stroke-width="2.4"/><path d="M9 1h6v6z" fill="#e1e7ee"/></svg>


<div class="a" style="left:0;top:1044px;width:6px;height:6px;background:radial-gradient(circle at 100% 0,rgba(0,0,0,0) 5.5px,#0b0c10 6.5px)"></div>
<div class="a" style="left:1674px;top:1044px;width:6px;height:6px;background:radial-gradient(circle at 0 0,rgba(0,0,0,0) 5.5px,#0b0c10 6.5px)"></div>
</body></html>
